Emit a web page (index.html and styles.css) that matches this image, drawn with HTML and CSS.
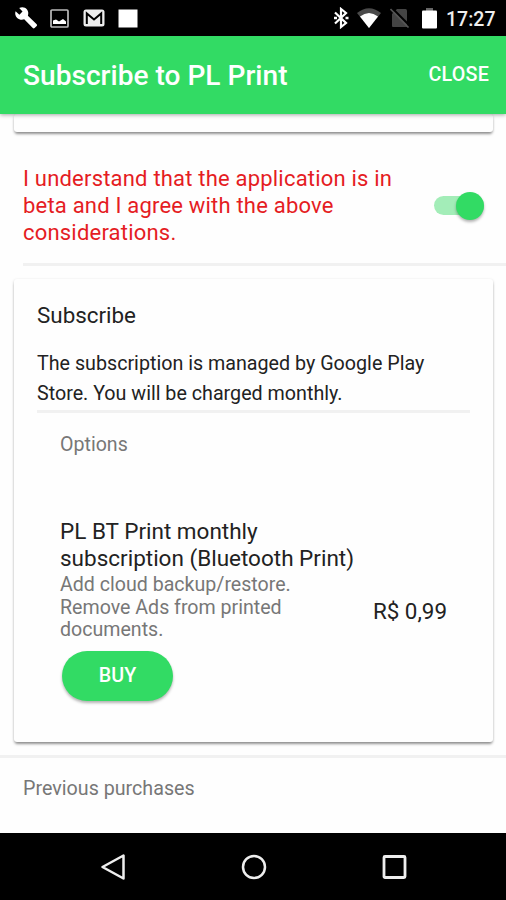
FILE: index.html
```html
<!DOCTYPE html>
<html lang="en">
<head>
    <meta charset="UTF-8">
    <meta name="viewport" content="width=device-width, initial-scale=1.0">
    <title>Subscribe to PL Print</title>
    <link rel="stylesheet" href="styles.css">
</head>
<body>
    <div class="status-bar">
        <div class="status-left">
            <svg width="24" height="24" viewBox="0 0 24 24"><path fill="#fff" d="M1.6 5.2 5.4 8.7 8.5 5.6 5.2 2C8 .7 11.300 1.200 13 3.600 14.400 5.500 14.600 7.700 13.900 9.700L22.700 18.300Q23.500 19.200 22.700 20.100L20.600 22Q19.700 22.800 18.800 22L10.200 13.300C7.800 14.100 5.200 13.700 3.200 11.900 1.300 10.100.7 7.500 1.600 5.200Z"/></svg>
            <svg width="19" height="19" viewBox="0 0 19 19"><rect x="1" y="1" width="17" height="17" rx="1" fill="none" stroke="#bbb" stroke-width="1.700"/><path fill="#fff" d="M3 15V11.500L6 10.500 9 12.500 13 10 16 12.500V15Z"/></svg>
            <svg class="mail" width="22" height="18" viewBox="0 0 22 18"><rect x=".5" y=".5" width="21" height="17" rx="2.500" fill="#eee"/><path fill="none" stroke="#000" stroke-width="2" d="M3.800 15V4.500L11 10.500 18.200 4.500V15"/></svg>
            <svg width="20" height="19" viewBox="0 0 20 19"><rect x=".5" y=".5" width="19" height="18" fill="#fff"/></svg>
        </div>
        <div class="status-right">
            <svg width="16" height="22" viewBox="0 0 16 22"><path fill="none" stroke="#fff" stroke-width="2.200" d="M2 5.500 13 16 8 20V2L13 6 2 16.500"/><path fill="#fff" d="M1 9.800h3v2.400H1zM12.500 9.800h3v2.400h-3z"/></svg>
            <svg class="wifi" width="24" height="20" viewBox="0 0 24 20"><path fill="#4a4a4a" d="M12 20 0 5Q12-4.500 24 5Z"/><path fill="#fff" d="M12 20 3 8.500Q12 1.500 21 8.500Z"/></svg>
            <svg class="sim" width="20" height="20" viewBox="0 0 20 20"><path fill="#444" d="M7 1H15.500Q17 1 17 2.500V19H3Q2 19 2 18V6Z"/><path stroke="#000" stroke-width="2" d="M1.500-.5 20 18"/><path stroke="#555" stroke-width="1.600" d="M.5 1 18.500 19.500"/></svg>
            <svg class="battery" width="15" height="21" viewBox="0 0 15 21"><path fill="#666" d="M4 0h7v3H4z"/><rect y="2.500" width="15" height="18" rx="1" fill="#fff"/></svg>
            <span class="clock">17:27</span>
        </div>
    </div>

    <div class="toolbar">
        <h1 class="title">Subscribe to PL Print</h1>
        <button class="close">CLOSE</button>
    </div>

    <div class="content">
        <div class="card card-end"></div>

        <div class="agree">
            <p class="agree-text">I understand that the application is in<br>beta and I agree with the above<br>considerations.</p>
            <div class="toggle"><span class="knob"></span></div>
        </div>

        <div class="card subscribe">
            <h2 class="card-title">Subscribe</h2>
            <p class="card-text">The subscription is managed by Google Play<br>Store. You will be charged monthly.</p>
            <div class="options">
                <div class="label">Options</div>
                <div class="item">
                    <div class="item-info">
                        <h3 class="item-name">PL BT Print monthly<br>subscription (Bluetooth Print)</h3>
                        <p class="item-desc">Add cloud backup/restore.<br>Remove Ads from printed<br>documents.</p>
                        <button class="buy">BUY</button>
                    </div>
                    <div class="price">R$ 0,99</div>
                </div>
            </div>
        </div>

        <div class="previous">Previous purchases</div>
    </div>

    <div class="nav-bar">
        <svg width="26" height="28" viewBox="0 0 26 28"><path fill="none" stroke="#eee" stroke-width="2.500" stroke-linejoin="round" d="M22.500 2.500V25.500L1.500 14Z"/></svg>
        <svg width="26" height="28" viewBox="0 0 26 28"><circle cx="13" cy="14" r="11" fill="none" stroke="#eee" stroke-width="2.500"/></svg>
        <svg width="26" height="28" viewBox="0 0 26 28"><rect x="3" y="3.500" width="21" height="21" rx="1" fill="none" stroke="#eee" stroke-width="2.800"/></svg>
    </div>
</body>
</html>
```
FILE: styles.css
```css
* {
    box-sizing: border-box;
}
body {
    margin: 0;
    height: 900px;
    display: flex;
    flex-direction: column;
    overflow: hidden;
    font-family: Roboto, sans-serif;
    background: #fefefe;
    color: #222;
}
h1, h2, h3, p {
    margin: 0;
    font-weight: 400;
}
button {
    border: none;
    font-family: inherit;
    color: white;
    cursor: pointer;
}
svg {
    display: block;
    flex: none;
}
.status-bar {
    height: 36px;
    flex: none;
    display: flex;
    justify-content: space-between;
    align-items: center;
    padding: 0 10px 0 14px;
    background: black;
}
.status-left {
    display: flex;
    align-items: center;
    gap: 12px;
}
.status-right {
    display: flex;
    align-items: center;
}
.mail { margin: 0 1px 0 2px; }
.wifi { margin-left: 8px; }
.sim { margin-left: 9px; }
.battery { margin-left: 12px; }
.clock {
    width: 50px;
    margin-left: 9px;
    padding-top: 3px;
    font-size: 19.5px;
    font-weight: 500;
    line-height: 33px;
    color: #eee;
    white-space: nowrap;
}
.toolbar {
    position: relative;
    z-index: 1;
    height: 78px;
    flex: none;
    display: flex;
    justify-content: space-between;
    align-items: center;
    padding: 0 17px 0 23px;
    background: #32db64;
    color: white;
    box-shadow: 0 1px 4px rgba(0, 0, 0, 0.35);
}
.title {
    font-size: 28.1px;
    font-weight: 500;
}
.close {
    padding: 0 0 2px;
    background: none;
    font-size: 19.7px;
    font-weight: 500;
    letter-spacing: 0.2px;
}
.content {
    flex: 1;
}
.card {
    margin: 0 13px 0 14px;
    border-radius: 3px;
    background: #fefefe;
    box-shadow: 0 3px 3px -1px rgba(0, 0, 0, 0.35), 0 1px 3px rgba(0, 0, 0, 0.2);
}
.card-end {
    height: 18px;
}
.agree {
    height: 117px;
    margin: 17px 0 13px 23px;
    display: flex;
    justify-content: space-between;
    padding: 16px 22px 0 0;
    border-bottom: 3px solid #f1f1f1;
}
.agree-text {
    font-size: 22px;
    line-height: 27px;
    letter-spacing: 0.2px;
    color: #e51c23;
    white-space: nowrap;
}
.toggle {
    width: 50px;
    height: 19px;
    margin-top: 31px;
    display: flex;
    align-items: center;
    justify-content: flex-end;
    border-radius: 10px;
    background: #a3edb8;
}
.knob {
    width: 28px;
    height: 28px;
    border-radius: 50%;
    background: #32db64;
    box-shadow: 0 2px 3px rgba(0, 0, 0, 0.3);
}
.subscribe {
    height: 463px;
    padding: 22px 23px 0;
}
.card-title {
    font-size: 22.4px;
    line-height: 29px;
}
.card-text {
    margin-top: 19px;
    height: 64px;
    font-size: 19.7px;
    line-height: 29.5px;
    border-bottom: 3px solid #f1f1f1;
    white-space: nowrap;
}
.options {
    padding: 17px 23px 0;
}
.label {
    font-size: 19.6px;
    line-height: 30px;
    color: #777;
}
.item {
    margin-top: 58px;
    display: flex;
    justify-content: space-between;
}
.item-info {
    white-space: nowrap;
}
.item-name {
    font-size: 22.5px;
    line-height: 27px;
}
.item-desc {
    padding-top: 2px;
    font-size: 19.6px;
    line-height: 22.6px;
    color: #777;
}
.buy {
    display: block;
    width: 111px;
    height: 50px;
    margin: 9px 0 0 2px;
    padding: 0 0 1px;
    border-radius: 25px;
    background: #32db64;
    font-size: 19.7px;
    font-weight: 500;
    box-shadow: 0 2px 3px rgba(0, 0, 0, 0.3);
}
.price {
    margin-top: 80px;
    font-size: 22.4px;
    line-height: 27px;
    white-space: nowrap;
}
.previous {
    margin-top: 13px;
    padding: 18px 23px 0;
    border-top: 3px solid #f1f1f1;
    font-size: 19.7px;
    line-height: 26px;
    color: #777;
}
.nav-bar {
    height: 67px;
    flex: none;
    display: flex;
    justify-content: center;
    align-items: center;
    gap: 114px;
    padding-left: 1px;
    background: black;
}
```
